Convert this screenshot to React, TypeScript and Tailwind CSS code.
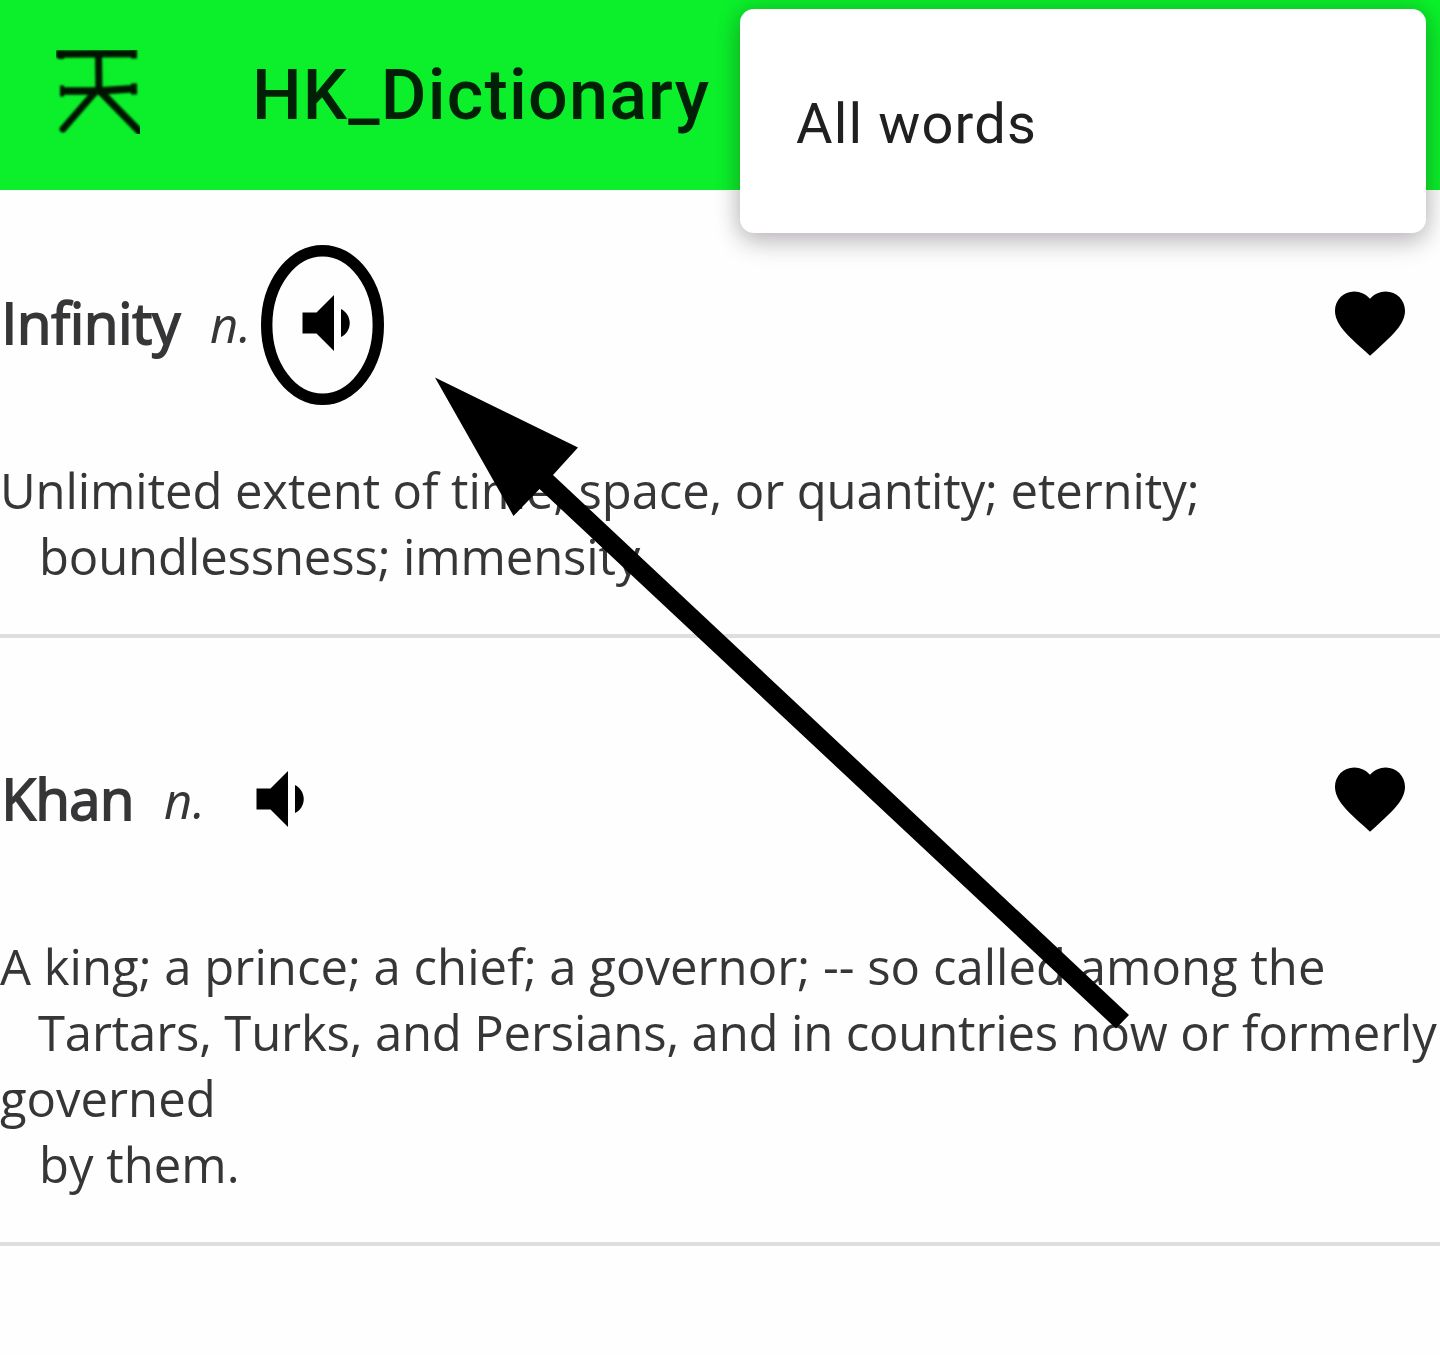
import React from "react";

function SpeakerIcon() {
  return (
    <svg viewBox="0 0 24 24" className="size-[84px] shrink-0 fill-black">
      <path d="M18.5 12c0-1.77-1.02-3.29-2.5-4.03v8.05c1.48-.73 2.5-2.25 2.5-4.02zM5 9v6h4l5 5V4L9 9H5z" />
    </svg>
  );
}

function HeartIcon() {
  return (
    <svg viewBox="0 0 24 24" className="size-[84px] shrink-0 fill-black">
      <path d="M12 21.35l-1.45-1.32C5.4 15.36 2 12.28 2 8.5 2 5.42 4.42 3 7.5 3c1.74 0 3.41.81 4.5 2.09C13.09 3.81 14.76 3 16.5 3 19.58 3 22 5.42 22 8.5c0 3.78-3.4 6.86-8.55 11.54L12 21.35z" />
    </svg>
  );
}

function Logo() {
  return (
    <svg viewBox="0 0 84 84" className="mb-[6px] ml-14 size-[84px] shrink-0 overflow-hidden" fill="none" stroke="#001402">
      <g className="blur-[1px]">
        <path strokeWidth="7.5" d="M0 4 L81 3.5" />
        <path strokeWidth="7" d="M42.5 4 L43 40" />
        <path strokeWidth="7.5" d="M4 41 L42 41 L81 38.5" />
        <path strokeWidth="7" strokeLinecap="round" d="M40 41 L7 79" />
        <path strokeWidth="7.5" d="M42 39 L86 84" />
        <path strokeWidth="11" d="M4 41 H8 M75 39 H81" />
        <path strokeWidth="9" d="M2 4.5 H8 M75 4 H81" />
      </g>
    </svg>
  );
}

type EntryProps = {
  word: string;
  wordClass: string;
  className: string;
  lines: { text: string; className: string }[];
};

function Entry({ word, wordClass, className, lines }: EntryProps) {
  return (
    <article className={"border-b-4 border-[#dfdde0] pb-[45px] " + className}>
      <div className="flex h-[84px] items-center pr-7">
        <h2 className={"h-[84px] pl-[1.5px] text-[56px] leading-[82px] font-normal whitespace-nowrap [-webkit-text-stroke:1.8px_#363537] " + wordClass}>{word}</h2>
        <span className="h-[84px] w-[40px] text-[49px] leading-[86px] tracking-[0.5px] whitespace-nowrap italic">n.</span>
        <div className="ml-[35px]"><SpeakerIcon /></div>
        <div className="ml-auto"><HeartIcon /></div>
      </div>
      <div className="mt-[92px] text-[49px] leading-[66px] whitespace-pre">
        {lines.map((l) => (
          <p key={l.text} className={l.className}>{l.text}</p>
        ))}
      </div>
    </article>
  );
}

export default function App() {
  return (
    <main className="relative h-[1355px] w-[1440px] overflow-hidden bg-[#fefefe] font-['Open_Sans',sans-serif] text-[#363537]">
      <header className="flex h-[190px] items-center bg-[#0cf02b] font-['Roboto',sans-serif]">
        <Logo />
        <h1 className="ml-[112px] text-[70px] leading-[84px] font-medium tracking-[1.2px] text-[#022006]">HK_Dictionary</h1>
      </header>

      <Entry
        word="Infinity"
        wordClass="w-[210px] tracking-[-0.1px]"
        className="pt-[91px]"
        lines={[
          { text: "Unlimited extent of time, space, or quantity; eternity;", className: "tracking-[-0.1px]" },
          { text: "boundlessness; immensity.", className: "pl-[39px] tracking-[-0.13px]" },
        ]}
      />
      <Entry
        word="Khan"
        wordClass="w-[164px] tracking-[-0.4px]"
        className="pt-[119px]"
        lines={[
          { text: "A king; a prince; a chief; a governor; -- so called among the", className: "tracking-[0.03px]" },
          { text: "Tartars, Turks, and Persians, and in countries now or formerly", className: "pl-[38px] tracking-[-0.15px]" },
          { text: "governed", className: "" },
          { text: "by them.", className: "pl-[39px]" },
        ]}
      />

      <div className="absolute top-[9px] left-[740px] flex h-[224px] w-[686px] items-center rounded-[14px] bg-white pt-[6px] pl-14 font-['Roboto',sans-serif] text-[56px] text-[#212021] shadow-[0_10px_26px_rgba(20,0,20,0.20),0_0_24px_rgba(20,0,20,0.17)]">
        <span className="tracking-[1.15px]">All words</span>
      </div>

      <svg viewBox="0 0 1440 1355" className="pointer-events-none absolute inset-0 size-full">
        <ellipse cx="322.5" cy="325" rx="55.8" ry="74.3" fill="none" stroke="#000" strokeWidth="11.4" />
        <path d="M435 377.500 L578 447.500 L553 475 L1129 1015 L1116 1028.500 L539.500 489 L513.500 516 Z" />
      </svg>
    </main>
  );
}
